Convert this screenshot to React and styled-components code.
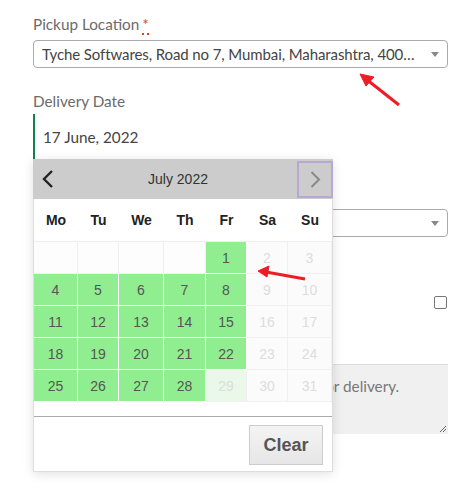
import React from "react";
import styled, { createGlobalStyle } from "styled-components";

const GlobalStyle = createGlobalStyle`
  body {
    margin: 0;
    background: #fff;
    font-family: "Lato", "Noto Sans", sans-serif;
  }
`;

const Page = styled.div`
  position: relative;
  width: 474px;
  height: 492px;
  overflow: hidden;
  padding: 14px 26px 0 33px;
  box-sizing: border-box;
`;

const Field = styled.div`
  display: flex;
  flex-direction: column;
  margin-bottom: ${({ gap }) => gap || 0}px;
`;

const Label = styled.label`
  font-size: 15.3px;
  line-height: 20px;
  color: #6b6b6b;
  margin-bottom: ${({ mb }) => (mb != null ? mb : 6)}px;
`;

const Required = styled.abbr`
  color: #e2401c;
  text-decoration: none;
  border-bottom: 2px dotted #e2401c;
  margin-left: 3px;
`;

const Select = styled.div`
  height: 28px;
  box-sizing: border-box;
  border: 1px solid #aaa;
  border-radius: 4px;
  display: flex;
  align-items: center;
  padding: 0 8px;
  font-size: 15px;
  color: #444;
  white-space: nowrap;
  overflow: hidden;
  &::after {
    content: "";
    margin-left: auto;
    flex-shrink: 0;
    border-left: 4px solid transparent;
    border-right: 4px solid transparent;
    border-top: 5px solid #888;
  }
`;

const SelectText = styled.span`
  overflow: hidden;
  text-overflow: ellipsis;
  margin-right: 13px;
  letter-spacing: -0.1px;
`;

const DateInput = styled.div`
  width: 300px;
  height: 46px;
  box-sizing: border-box;
  border-left: 2px solid #0f834d;
  border-bottom: 1px solid #ccc;
  display: flex;
  align-items: center;
  padding-left: 8px;
  font-size: 15.3px;
  color: #444;
`;

const CheckRow = styled.div`
  display: flex;
  justify-content: flex-end;
  margin-bottom: 55px;
`;

const Checkbox = styled.span`
  width: 11px;
  height: 11px;
  border: 1px solid #777;
  border-radius: 2px;
  margin-right: 1px;
`;

const Notes = styled.div`
  position: relative;
  height: 70px;
  background: #f0f0f0;
  border-top: 1px solid #ddd;
  box-sizing: border-box;
  padding: 12px 10px 12px 6px;
  font-size: 15.3px;
  color: #777;
  white-space: nowrap;
`;

const Grip = styled.svg`
  position: absolute;
  right: 1px;
  bottom: 1px;
`;

const Calendar = styled.div`
  position: absolute;
  left: 33px;
  top: 159px;
  width: 300px;
  height: 313px;
  box-sizing: border-box;
  background: #fff;
  border: 1px solid #ddd;
  box-shadow: 0 2px 10px rgba(0, 0, 0, 0.12);
  font-family: "Liberation Sans", Arial, sans-serif;
  display: flex;
  flex-direction: column;
`;

const CalHeader = styled.div`
  height: 40px;
  background: #ccc;
  display: flex;
  align-items: center;
  margin: -1px -1px 0 -1px;
`;

const NavButton = styled.div`
  width: ${({ boxed }) => (boxed ? 36 : 30)}px;
  height: ${({ boxed }) => (boxed ? 37 : 40)}px;
  box-sizing: border-box;
  border: ${({ boxed }) => (boxed ? "2px solid #b9a7d4" : "none")};
  display: flex;
  align-items: center;
  justify-content: center;
`;

const Title = styled.div`
  flex: 1;
  text-align: center;
  font-size: 14px;
  color: #333;
  padding-right: 4px;
`;

const DayGrid = styled.div`
  display: grid;
  grid-template-columns: 44px 41px 45px 42px 41px 41px 44px;
`;

const WeekDay = styled.div`
  height: 42px;
  display: flex;
  align-items: center;
  justify-content: center;
  font-weight: bold;
  font-size: 14px;
  color: #222;
  border-bottom: 1px solid #eee;
`;

const cellBg = {
  open: "#90ee90",
  off: "#fbfbfb",
  soft: "#e9f8e9",
  blank: "#fdfdfd",
};

const Cell = styled.div`
  height: 32px;
  box-sizing: border-box;
  display: flex;
  align-items: center;
  justify-content: center;
  font-size: 14px;
  background: ${({ kind }) => cellBg[kind]};
  color: ${({ kind }) => (kind === "open" ? "#555" : "#ddd")};
  border-right: 1px solid ${({ kind }) => (kind === "open" ? "#fff" : "#f0f0f0")};
  border-bottom: 1px solid ${({ kind }) => (kind === "open" ? "#fff" : "#f0f0f0")};
`;

const Footer = styled.div`
  margin-top: auto;
  border-top: 1px solid #aaa;
  height: 55px;
  display: flex;
  justify-content: flex-end;
  align-items: flex-start;
  padding: 8px 9px 0 0;
  box-sizing: border-box;
`;

const ClearButton = styled.button`
  width: 74px;
  height: 40px;
  border: 1px solid #ccc;
  background: linear-gradient(#f4f4f4, #e6e6e6);
  font-family: "Liberation Sans", Arial, sans-serif;
  font-weight: bold;
  font-size: 18px;
  color: #555;
  padding: 0;
`;

const Arrows = styled.svg`
  position: absolute;
  left: 0;
  top: 0;
  pointer-events: none;
`;

const days = ["Mo", "Tu", "We", "Th", "Fr", "Sa", "Su"];

function buildCells() {
  const cells = [];
  for (let i = 0; i < 4; i++) cells.push({ key: "b" + i, label: "", kind: "blank" });
  for (let d = 1; d <= 31; d++) {
    const col = (d + 3) % 7;
    let kind = "open";
    if (col >= 5) kind = "off";
    if (d === 29) kind = "soft";
    if (d > 29) kind = "off";
    cells.push({ key: d, label: d, kind });
  }
  return cells;
}

export default function App() {
  const cells = buildCells();
  return (
    <>
      <GlobalStyle />
      <Page>
        <Field gap={23}>
          <Label>
            Pickup Location<Required title="required">*</Required>
          </Label>
          <Select>
            <SelectText>Tyche Softwares, Road no 7, Mumbai, Maharashtra, 400001, India</SelectText>
          </Select>
        </Field>
        <Field gap={11}>
          <Label mb={3}>Delivery Date</Label>
          <DateInput>17 June, 2022</DateInput>
        </Field>
        <Field gap={59}>
          <Label mb={18}>Time</Label>
          <Select />
        </Field>
        <CheckRow>
          <Checkbox />
        </CheckRow>
        <Notes>
          Notes about your order, e.g. special notes for delivery.
          <Grip width="10" height="10" viewBox="0 0 10 10">
            <path d="M9 3 L3 9 M9 6 L6 9" stroke="#666" strokeWidth="1" />
          </Grip>
        </Notes>

        <Calendar>
          <CalHeader>
            <NavButton>
              <svg width="12" height="18" viewBox="0 0 12 18">
                <path d="M10 1 L2 9 L10 17" fill="none" stroke="#222" strokeWidth="2.4" />
              </svg>
            </NavButton>
            <Title>July 2022</Title>
            <NavButton boxed>
              <svg width="11" height="17" viewBox="0 0 11 17">
                <path d="M1.5 1 L9 8.5 L1.5 16" fill="none" stroke="#888" strokeWidth="2" />
              </svg>
            </NavButton>
          </CalHeader>
          <DayGrid>
            {days.map((d) => (
              <WeekDay key={d}>{d}</WeekDay>
            ))}
            {cells.map((c) => (
              <Cell key={c.key} kind={c.kind}>
                {c.label}
              </Cell>
            ))}
          </DayGrid>
          <Footer>
            <ClearButton>Clear</ClearButton>
          </Footer>
        </Calendar>

        <Arrows width="474" height="492" viewBox="0 0 474 492">
          <g stroke="#ee1c25" strokeWidth="3" fill="#ee1c25">
            <line x1="399" y1="105" x2="366" y2="79" />
            <polygon points="360,74 374,77 366,86" strokeWidth="1" />
            <line x1="305" y1="279" x2="266" y2="272" />
            <polygon points="258,271 269,266 267,277" strokeWidth="1" />
          </g>
        </Arrows>
      </Page>
    </>
  );
}
